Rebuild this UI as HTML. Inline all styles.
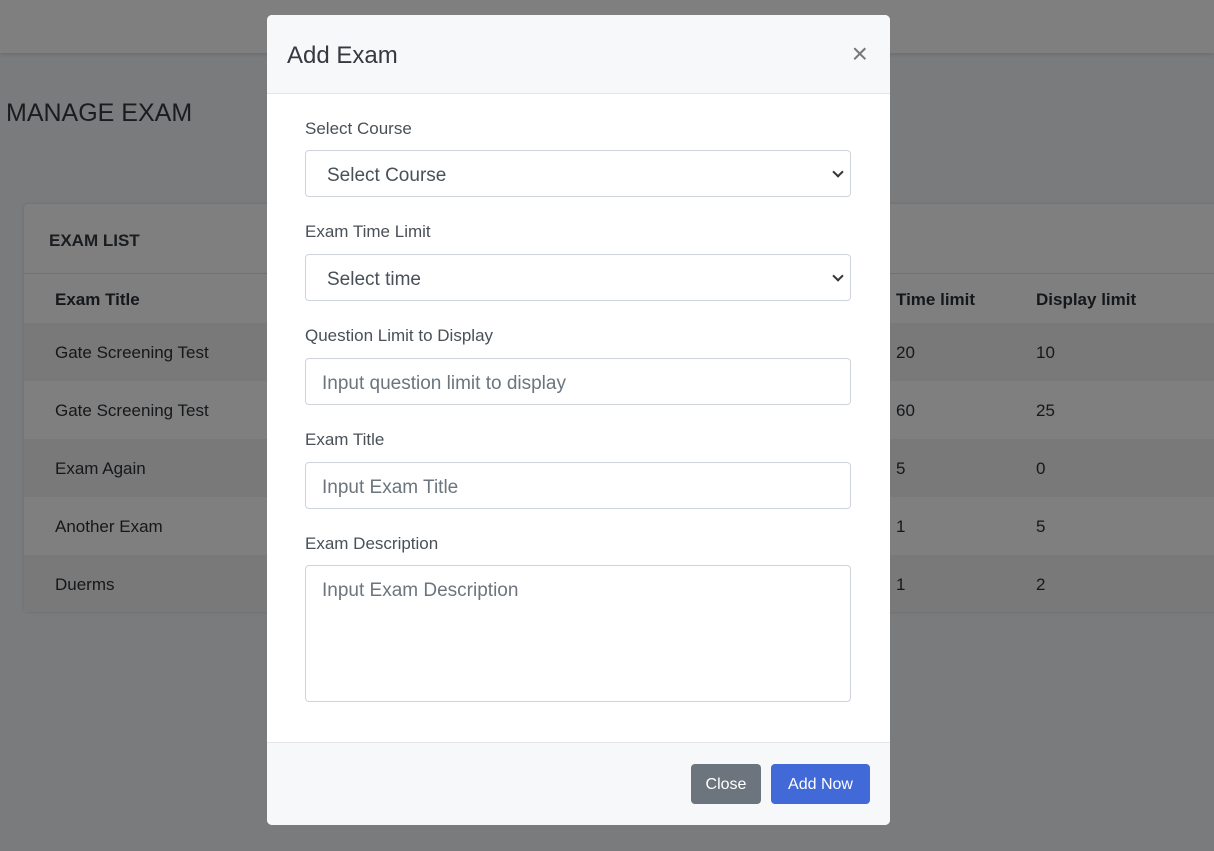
<!DOCTYPE html>
<html><head><style>
*{box-sizing:border-box;margin:0;padding:0}
body{width:1214px;height:851px;overflow:hidden;background:#f4f6f9;font-family:"Liberation Sans",sans-serif;color:#212529;position:relative}
.nav{position:absolute;left:0;top:0;width:1214px;height:53px;background:#fff;box-shadow:0 1px 4px rgba(0,0,0,.15)}
.h1{position:absolute;left:6px;top:99px;font-size:25px;color:#343a40}
.card{position:absolute;left:24px;top:204px;width:1200px;height:408px;background:#fff;border-radius:4px;box-shadow:0 0 3px rgba(0,0,0,.15)}
.ch{height:70px;border-bottom:1px solid #dee2e6;padding:27px 25px;font-weight:bold;font-size:17px;color:#343a40}
.row{position:absolute;left:0;width:1200px;height:58px;font-size:17px;color:#2b3036}
.row span{position:absolute;top:20px}
.s{background:#f2f2f2}
.ov{position:absolute;inset:0;background:rgba(0,0,0,.5)}
.modal{position:absolute;left:267px;top:15px;width:623px;height:810px;background:#fff;border-radius:5px;overflow:hidden}
.mh{height:79px;background:#f7f8fa;border-bottom:1px solid #e3e6ea;padding:27px 20px;font-size:24px;color:#343a40;position:relative}
.x{position:absolute;right:22px;top:23px;font-size:28px;color:#777}
.lab{position:absolute;left:38px;font-size:17px;color:#495057}
.inp{position:absolute;left:38px;width:546px;height:47px;border:1px solid #ced4da;border-radius:4px;font-size:19px;color:#6c757d;padding:14px 16px 0}
.sel{color:#495057;padding-left:21px}
.sel:after{content:"";position:absolute;right:8px;top:17px;width:6px;height:6px;border-right:2px solid #333;border-bottom:2px solid #333;transform:rotate(45deg)}
.mf{position:absolute;left:0;top:727px;width:623px;height:83px;background:#f7f8fa;border-top:1px solid #e3e6ea}
.btn{position:absolute;top:21px;height:40px;border-radius:4px;color:#fff;font-size:16px;text-align:center;line-height:42px}
</style></head><body>
<div class="nav"></div>
<div class="h1">MANAGE EXAM</div>
<div class="card">
<div class="ch">EXAM LIST</div>
<div class="row" style="top:70px;height:49px;font-weight:bold"><span style="left:31px;top:16px">Exam Title</span><span style="left:872px;top:16px">Time limit</span><span style="left:1012px;top:16px">Display limit</span></div>
<div class="row s" style="top:119px"><span style="left:31px">Gate Screening Test</span><span style="left:872px">20</span><span style="left:1012px">10</span></div>
<div class="row" style="top:177px"><span style="left:31px">Gate Screening Test</span><span style="left:872px">60</span><span style="left:1012px">25</span></div>
<div class="row s" style="top:235px"><span style="left:31px">Exam Again</span><span style="left:872px">5</span><span style="left:1012px">0</span></div>
<div class="row" style="top:293px"><span style="left:31px">Another Exam</span><span style="left:872px">1</span><span style="left:1012px">5</span></div>
<div class="row s" style="top:351px;height:57px"><span style="left:31px">Duerms</span><span style="left:872px">1</span><span style="left:1012px">2</span></div>
</div>
<div class="ov"></div>
<div class="modal">
<div class="mh">Add Exam<span class="x">×</span></div>
<div class="lab" style="top:104px">Select Course</div>
<div class="inp sel" style="top:135px">Select Course</div>
<div class="lab" style="top:207px">Exam Time Limit</div>
<div class="inp sel" style="top:239px">Select time</div>
<div class="lab" style="top:311px">Question Limit to Display</div>
<div class="inp" style="top:343px">Input question limit to display</div>
<div class="lab" style="top:415px">Exam Title</div>
<div class="inp" style="top:447px">Input Exam Title</div>
<div class="lab" style="top:519px">Exam Description</div>
<div class="inp" style="top:550px;height:137px">Input Exam Description</div>
<div class="mf">
<div class="btn" style="left:424px;width:70px;background:#6c757d">Close</div>
<div class="btn" style="left:504px;width:99px;background:#4169d8">Add Now</div>
</div>
</div>
</body></html>
